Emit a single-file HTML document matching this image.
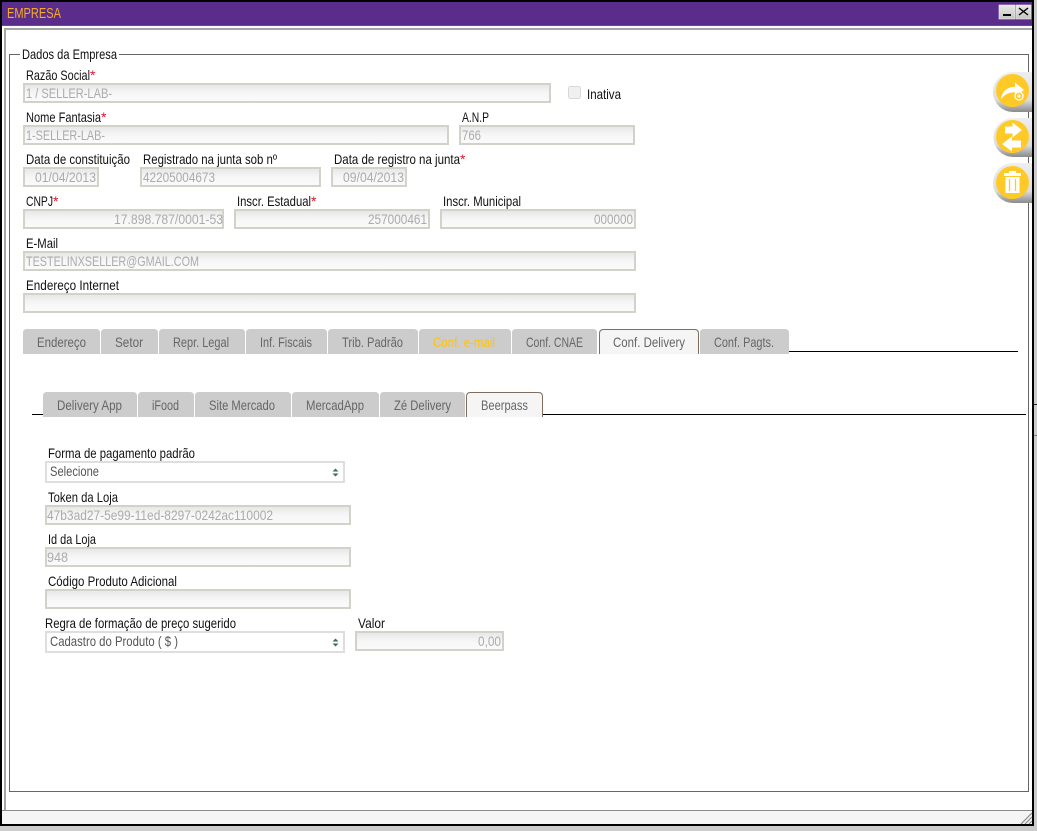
<!DOCTYPE html>
<html><head><meta charset="utf-8"><title>Empresa</title>
<style>
html,body{margin:0;padding:0;background:#ccc;width:1037px;height:831px;overflow:hidden}
svg{display:block}
text{font-family:"Liberation Sans",sans-serif;font-size:14px;fill:#111}
.v{fill:#ababab}
.r{fill:#e0102a}
.t{fill:#666;font-size:14px}
.i{fill:url(#ig);stroke:#d2d2c8;stroke-width:2}
.tab{fill:#ccc}
.act{fill:#f5f5f5}
.actl{fill:none;stroke:#7d6e60;stroke-width:1}
.sel{fill:#fff;stroke:#dedede;stroke-width:2}
</style></head><body>
<svg width="1037" height="831" viewBox="0 0 1037 831" xmlns="http://www.w3.org/2000/svg">
<defs>
<linearGradient id="ig" x1="0" y1="0" x2="0" y2="1"><stop offset="0" stop-color="#e6e6e6"/><stop offset=".5" stop-color="#f6f6f6"/><stop offset="1" stop-color="#fbfbfb"/></linearGradient>
<linearGradient id="pg" x1="0" y1="0" x2="0" y2="1"><stop offset="0" stop-color="#eeeeee"/><stop offset=".7" stop-color="#dcdcdc"/><stop offset="1" stop-color="#8a8a8a"/></linearGradient>
<linearGradient id="bg" x1="0" y1="0" x2="0" y2="1"><stop offset="0" stop-color="#e8e8e8"/><stop offset="1" stop-color="#c4c4c4"/></linearGradient>
</defs>

<!-- window -->
<rect x="0" y="0" width="1037" height="831" fill="#ccc"/>
<rect x="0" y="0" width="1034" height="826" fill="#000"/>
<rect x="2" y="2" width="1030" height="822" fill="#fff"/>
<rect x="2" y="2" width="1030" height="23" fill="#5b2d8b"/>
<rect x="2" y="25" width="1030" height="1" fill="#b03050"/>
<rect x="4" y="28" width="1028" height="2" fill="#a6a6a6"/>
<rect x="4" y="28" width="2" height="782" fill="#a6a6a6"/>
<rect x="2" y="810" width="1030" height="1" fill="#8c8c8c"/>
<rect x="2" y="811" width="1030" height="13" fill="#f5f5f5"/>
<rect x="1034" y="404" width="3" height="1" fill="#222"/>
<rect x="1034" y="435" width="3" height="1" fill="#777"/>
<path d="M1021 824L1032 813M1025 824L1032 817M1029 824L1032 821" stroke="#888" stroke-width="1.2" fill="none"/>

<text x="7" y="18" textLength="54" lengthAdjust="spacingAndGlyphs" style="fill:#f7a928;font-size:15px">EMPRESA</text>

<!-- window buttons -->
<rect x="999" y="5" width="16" height="14" fill="url(#bg)" stroke="#f2f2f2" stroke-width=".6"/>
<rect x="1003" y="14" width="8" height="2" fill="#000"/>
<rect x="1016" y="5" width="15" height="14" fill="url(#bg)" stroke="#f2f2f2" stroke-width=".6"/>
<path d="M1019 8L1028 15M1028 8L1019 15" stroke="#000" stroke-width="1.4"/>

<!-- fieldset -->
<path d="M20 54.5H9.5V791.5H1028.5V54.5H119" fill="none" stroke="#666" stroke-width="1"/>
<text x="22" y="59" textLength="95" lengthAdjust="spacingAndGlyphs">Dados da Empresa</text>

<!-- fields -->
<text x="26" y="80" textLength="64" lengthAdjust="spacingAndGlyphs">Razão Social</text><text x="90" y="80" class="r">*</text>
<rect class="i" x="24" y="84" width="526" height="18"/>
<text class="v" x="26" y="98" textLength="86" lengthAdjust="spacingAndGlyphs">1 / SELLER-LAB-</text>
<rect x="568.5" y="86.5" width="12" height="12" rx="2" fill="#f0f0f0" stroke="#d8d8d8"/>
<text x="587" y="99" textLength="34" lengthAdjust="spacingAndGlyphs">Inativa</text>

<text x="26" y="122" textLength="75" lengthAdjust="spacingAndGlyphs">Nome Fantasia</text><text x="101" y="122" class="r">*</text>
<rect class="i" x="24" y="126" width="424" height="18"/>
<text class="v" x="26" y="140" textLength="79" lengthAdjust="spacingAndGlyphs">1-SELLER-LAB-</text>
<text x="462" y="122" textLength="27" lengthAdjust="spacingAndGlyphs">A.N.P</text>
<rect class="i" x="460" y="126" width="174" height="18"/>
<text class="v" x="462" y="140" textLength="19" lengthAdjust="spacingAndGlyphs">766</text>

<text x="26" y="164" textLength="104" lengthAdjust="spacingAndGlyphs">Data de constituição</text>
<rect class="i" x="24" y="168" width="74" height="18"/>
<text class="v" x="35" y="182" textLength="61" lengthAdjust="spacingAndGlyphs">01/04/2013</text>
<text x="143" y="164" textLength="134" lengthAdjust="spacingAndGlyphs">Registrado na junta sob nº</text>
<rect class="i" x="141" y="168" width="179" height="18"/>
<text class="v" x="143" y="182" textLength="72" lengthAdjust="spacingAndGlyphs">42205004673</text>
<text x="334" y="164" textLength="126" lengthAdjust="spacingAndGlyphs">Data de registro na junta</text><text x="460" y="164" class="r">*</text>
<rect class="i" x="332" y="168" width="74" height="18"/>
<text class="v" x="343" y="182" textLength="61" lengthAdjust="spacingAndGlyphs">09/04/2013</text>

<text x="26" y="206" textLength="27" lengthAdjust="spacingAndGlyphs">CNPJ</text><text x="53" y="206" class="r">*</text>
<rect class="i" x="24" y="210" width="199" height="18"/>
<text class="v" x="114" y="224" textLength="109" lengthAdjust="spacingAndGlyphs">17.898.787/0001-53</text>
<text x="237" y="206" textLength="74" lengthAdjust="spacingAndGlyphs">Inscr. Estadual</text><text x="311" y="206" class="r">*</text>
<rect class="i" x="235" y="210" width="194" height="18"/>
<text class="v" x="368" y="224" textLength="59" lengthAdjust="spacingAndGlyphs">257000461</text>
<text x="443" y="206" textLength="78" lengthAdjust="spacingAndGlyphs">Inscr. Municipal</text>
<rect class="i" x="441" y="210" width="194" height="18"/>
<text class="v" x="594" y="224" textLength="39" lengthAdjust="spacingAndGlyphs">000000</text>

<text x="26" y="248" textLength="32" lengthAdjust="spacingAndGlyphs">E-Mail</text>
<rect class="i" x="24" y="252" width="611" height="18"/>
<text class="v" x="26" y="266" textLength="173" lengthAdjust="spacingAndGlyphs">TESTELINXSELLER@GMAIL.COM</text>
<text x="26" y="290" textLength="93" lengthAdjust="spacingAndGlyphs">Endereço Internet</text>
<rect class="i" x="24" y="294" width="611" height="18"/>

<!-- main tabs -->
<rect x="789" y="351" width="229" height="1" fill="#000"/>
<path class="tab" d="M23 354V333q0-4 4-4H96q4 0 4 4V354Z"/>
<path class="tab" d="M101 354V333q0-4 4-4H154q4 0 4 4V354Z"/>
<path class="tab" d="M159 354V333q0-4 4-4H241q4 0 4 4V354Z"/>
<path class="tab" d="M246 354V333q0-4 4-4H323q4 0 4 4V354Z"/>
<path class="tab" d="M328 354V333q0-4 4-4H414q4 0 4 4V354Z"/>
<path class="tab" d="M419 354V333q0-4 4-4H507q4 0 4 4V354Z"/>
<path class="tab" d="M512 354V333q0-4 4-4H593q4 0 4 4V354Z"/>
<path class="act" d="M599 354V333q0-4 4-4H695q4 0 4 4V354Z"/>
<path class="actl" d="M599.5 354V333.5q0-4 4-4H694.5q4 0 4 4V354"/>
<path class="tab" d="M700 354V333q0-4 4-4H785q4 0 4 4V354Z"/>
<text class="t" x="37" y="347" textLength="49" lengthAdjust="spacingAndGlyphs">Endereço</text>
<text class="t" x="115" y="347" textLength="28" lengthAdjust="spacingAndGlyphs">Setor</text>
<text class="t" x="173" y="347" textLength="56" lengthAdjust="spacingAndGlyphs">Repr. Legal</text>
<text class="t" x="260" y="347" textLength="52" lengthAdjust="spacingAndGlyphs">Inf. Fiscais</text>
<text class="t" x="342" y="347" textLength="61" lengthAdjust="spacingAndGlyphs">Trib. Padrão</text>
<text x="433" y="347" textLength="62" lengthAdjust="spacingAndGlyphs" style="fill:#ffc20e">Conf. e-mail</text>
<text class="t" x="526" y="347" textLength="57" lengthAdjust="spacingAndGlyphs">Conf. CNAE</text>
<text class="t" x="613" y="347" textLength="72" lengthAdjust="spacingAndGlyphs">Conf. Delivery</text>
<text class="t" x="714" y="347" textLength="60" lengthAdjust="spacingAndGlyphs">Conf. Pagts.</text>

<!-- sub tabs -->
<rect x="32" y="414" width="11" height="1" fill="#000"/>
<rect x="543" y="414" width="483" height="1" fill="#000"/>
<path class="tab" d="M43 417V396q0-4 4-4H133q4 0 4 4V417Z"/>
<path class="tab" d="M138 417V396q0-4 4-4H190q4 0 4 4V417Z"/>
<path class="tab" d="M195 417V396q0-4 4-4H287q4 0 4 4V417Z"/>
<path class="tab" d="M292 417V396q0-4 4-4H375q4 0 4 4V417Z"/>
<path class="tab" d="M380 417V396q0-4 4-4H461q4 0 4 4V417Z"/>
<path class="act" d="M466 417V396q0-4 4-4H539q4 0 4 4V417Z"/>
<path class="actl" d="M466.5 417V396.5q0-4 4-4H538.5q4 0 4 4V417"/>
<text class="t" x="57" y="410" textLength="65" lengthAdjust="spacingAndGlyphs">Delivery App</text>
<text class="t" x="152" y="410" textLength="27" lengthAdjust="spacingAndGlyphs">iFood</text>
<text class="t" x="209" y="410" textLength="66" lengthAdjust="spacingAndGlyphs">Site Mercado</text>
<text class="t" x="306" y="410" textLength="58" lengthAdjust="spacingAndGlyphs">MercadApp</text>
<text class="t" x="394" y="410" textLength="57" lengthAdjust="spacingAndGlyphs">Zé Delivery</text>
<text class="t" x="481" y="410" textLength="47" lengthAdjust="spacingAndGlyphs">Beerpass</text>

<!-- delivery form -->
<text x="48" y="458" textLength="147" lengthAdjust="spacingAndGlyphs">Forma de pagamento padrão</text>
<rect class="sel" x="46" y="462" width="298" height="20"/>
<text x="50" y="476" textLength="49" lengthAdjust="spacingAndGlyphs" style="fill:#555">Selecione</text>
<path d="M335.500 468.500L338.500 471.500H332.500ZM335.500 476.500L338.500 473.500H332.500Z" fill="#3d6b5e"/>

<text x="48" y="502" textLength="70" lengthAdjust="spacingAndGlyphs">Token da Loja</text>
<rect class="i" x="46" y="506" width="304" height="18"/>
<text class="v" x="47" y="520" textLength="226" lengthAdjust="spacingAndGlyphs">47b3ad27-5e99-11ed-8297-0242ac110002</text>

<text x="48" y="544" textLength="48" lengthAdjust="spacingAndGlyphs">Id da Loja</text>
<rect class="i" x="46" y="548" width="304" height="18"/>
<text class="v" x="47" y="562" textLength="21" lengthAdjust="spacingAndGlyphs">948</text>

<text x="48" y="586" textLength="129" lengthAdjust="spacingAndGlyphs">Código Produto Adicional</text>
<rect class="i" x="46" y="590" width="304" height="18"/>

<text x="45" y="628" textLength="191" lengthAdjust="spacingAndGlyphs">Regra de formação de preço sugerido</text>
<rect class="sel" x="46" y="632" width="298" height="20"/>
<text x="50" y="646" textLength="128" lengthAdjust="spacingAndGlyphs" style="fill:#555">Cadastro do Produto ( $ )</text>
<path d="M335.500 638.500L338.500 641.500H332.500ZM335.500 646.500L338.500 643.500H332.500Z" fill="#3d6b5e"/>
<text x="358" y="628" textLength="27" lengthAdjust="spacingAndGlyphs">Valor</text>
<rect class="i" x="356" y="632" width="147" height="18"/>
<text class="v" x="478" y="646" textLength="23" lengthAdjust="spacingAndGlyphs">0,00</text>

<!-- side buttons -->
<path d="M1032 72H1013a20 20 0 0 0 0 40H1032Z" fill="url(#pg)"/>
<circle cx="1012.500" cy="90.500" r="16.500" fill="#ffca28"/>
<path d="M1001 99C1002 91 1008 86.500 1015 87V82.500L1024 90L1015 97V92.500C1009 92 1005 94.500 1001 99Z" fill="#fff"/>
<circle cx="1019" cy="96" r="4" fill="#ffca28" stroke="#fff" stroke-width="1.300"/>
<path d="M1017 96H1021M1019 94V98" stroke="#fff" stroke-width="1"/>

<path d="M1032 118H1013a19.500 19.500 0 0 0 0 39H1032Z" fill="url(#pg)"/>
<circle cx="1012.500" cy="136.500" r="16.500" fill="#ffca28"/>
<path d="M1005 126.500H1012.500V122.500L1022 130L1012.500 137.500V133.500H1005Z" fill="#fff"/>
<path d="M1021 140.500H1012V136.500L1002 144L1012 151.500V147.500H1021Z" fill="#fff"/>

<path d="M1032 163H1013a20 20 0 0 0 0 40H1032Z" fill="url(#pg)"/>
<circle cx="1012.500" cy="182.500" r="16.500" fill="#ffca28"/>
<path d="M1009 173V171H1016V173H1021V176H1004V173Z" fill="#fff"/>
<path d="M1005.500 177H1019.500V193H1005.500Z" fill="#fff"/>
<path d="M1009.500 179V191M1015.500 179V191" stroke="#ffca28" stroke-width="1.300"/>
<path d="M1028.500 112V118M1028.500 157V163" stroke="#666" stroke-width="1"/>
</svg>
</body></html>
